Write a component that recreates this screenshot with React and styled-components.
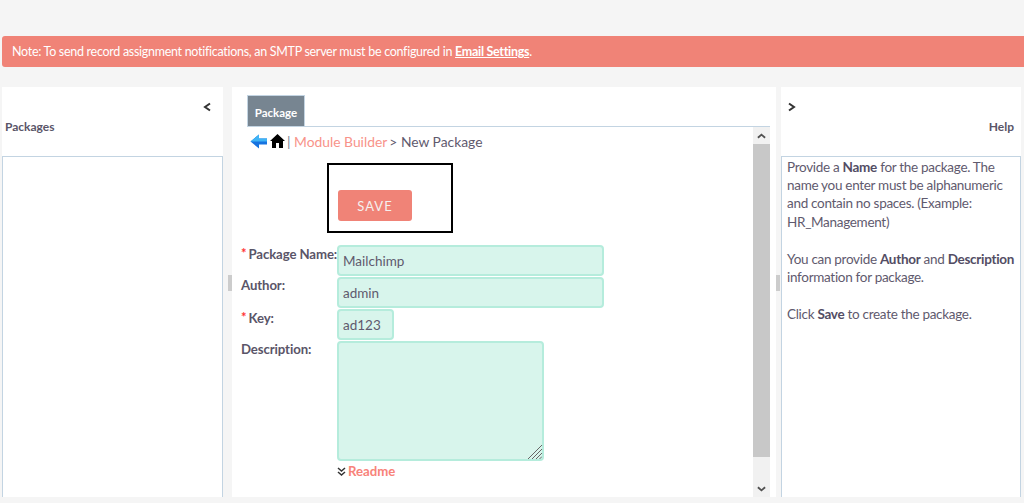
import React from "react";
import styled, { createGlobalStyle } from "styled-components";

const Global = createGlobalStyle`
  html, body { margin: 0; padding: 0; background: #f5f5f5; height: 503px; overflow: hidden; }
  * { box-sizing: border-box; }
  body { font-family: Lato, "Open Sans", sans-serif; color: #534d64; font-size: 13px; }
`;
const Page = styled.div`
  height: 503px;
  padding: 36px 0 6px 2px;
  display: flex;
  flex-direction: column;
  gap: 20px;
`;
const Alert = styled.div`
  height: 31px;
  background: #f08377;
  border-radius: 3px 0 0 3px;
  color: #fff;
  font-size: 12.5px;
  line-height: 31px;
  padding-left: 10px;
  letter-spacing: -0.29px;
  a { color: #fff; font-weight: 700; text-decoration: underline; }
`;
const Columns = styled.div`
  height: 410px;
  display: flex;
`;
const SidePanel = styled.section`
  width: ${p => p.$w}px;
  background: #fff;
  display: flex;
  flex-direction: column;
`;
const SideHead = styled.div`
  height: 69px;
  padding: 15px ${p => p.$right}px 0 ${p => p.$left}px;
  display: flex;
  flex-direction: column;
  align-items: ${p => p.$align};
`;
const Collapse = styled.svg`
  width: 8px;
  height: 10px;
  margin-bottom: 7px;
  align-self: ${p => p.$self};
  flex: none;
`;
const SideTitle = styled.div`
  font-size: 12px;
  font-weight: 700;
  line-height: 16px;
  color: #5a5568;
`;
const TreeBox = styled.div`
  flex: 1;
  border: 1px solid #c3d4e2;
  border-bottom: 0;
  padding: 0.5px 5px 0;
  font-size: 13.5px;
  letter-spacing: -0.3px;
  line-height: 18.4px;
  color: #5f5a6e;
  p { margin: 0 0 18.4px; }
  b { font-weight: 700; color: #534d64; }
`;
const Splitter = styled.div`
  width: ${p => p.$w}px;
  display: flex;
  align-items: center;
  padding-left: ${p => p.$pl}px;
  &::before {
    content: "";
    display: block;
    width: 4px;
    height: 16px;
    margin-top: -19px;
    background: #ccc;
  }
`;
const CenterPanel = styled.section`
  width: 544px;
  background: #fff;
  padding: 8px 6px 0 15px;
  display: flex;
  flex-direction: column;
`;
const Tab = styled.div`
  width: 58px;
  height: 31px;
  flex: none;
  background: #778591;
  border: 1px solid #c3d4e2;
  border-bottom: 0;
  color: #fff;
  font-size: 11.5px;
  font-weight: 700;
  line-height: 34px;
  text-align: center;
`;
const TabBody = styled.div`
  flex: 1;
  min-height: 0;
  border-top: 1px solid #c3d4e2;
  display: flex;
`;
const Form = styled.div`
  flex: 1;
  padding-top: 5px;
`;
const Crumb = styled.div`
  height: 18px;
  display: flex;
  align-items: center;
  padding-left: 3px;
  font-size: 13.85px;
  white-space: nowrap;
  color: #5f5a6e;
  a { color: #f8938a; margin-right: 2px; }
  i { font-style: normal; color: #778591; margin-left: 2px; }
`;
const BackIcon = styled.svg`
  width: 17px;
  height: 15px;
  flex: none;
`;
const HomeIcon = styled.svg`
  width: 15px;
  height: 14px;
  flex: none;
  margin-left: 3px;
`;
const SaveFrame = styled.div`
  width: 126px;
  height: 70px;
  margin: 13px 0 12px 80px;
  border: 2px solid #000;
  padding: 25px 0 0 9px;
`;
const SaveButton = styled.button`
  display: block;
  width: 74px;
  height: 31px;
  padding: 0;
  border: 0;
  border-radius: 3px;
  background: #f08377;
  color: #f5f0ee;
  font-family: inherit;
  font-size: 13px;
  letter-spacing: 1px;
`;
const Row = styled.div`
  display: flex;
  margin-bottom: 1px;
  margin-left: -6px;
`;
const Label = styled.label`
  width: 96px;
  flex: none;
  margin-top: -1px;
  font-size: 13.2px;
  font-weight: 700;
  line-height: 18px;
  white-space: nowrap;
  letter-spacing: -0.1px;
  color: #5a5568;
  span { color: #f33; font-size: 13px; margin-right: 2px; vertical-align: 1px; }
`;
const Field = styled.input`
  width: ${p => p.$w}px;
  height: 31px;
  border: 2px solid #b5ecdc;
  border-radius: 4px;
  background: #d8f5ec;
  color: #5f5a6e;
  font-family: inherit;
  font-size: 13.5px;
  padding: 1px 4px 0;
  outline: 0;
`;
const AreaWrap = styled.div`
  position: relative;
  width: 207px;
  height: 120px;
`;
const Area = styled.textarea`
  display: block;
  width: 100%;
  height: 100%;
  border: 2px solid #b5ecdc;
  border-radius: 4px;
  background: #d8f5ec;
  outline: 0;
  margin: 0;
  resize: none;
`;
const Grip = styled.svg`
  position: absolute;
  right: 2px;
  bottom: 2px;
  width: 14px;
  height: 14px;
`;
const Readme = styled.div`
  margin: 1px 0 0 90px;
  display: flex;
  align-items: center;
  gap: 2px;
  font-size: 13.2px;
  font-weight: 700;
  line-height: 18px;
  color: #f8837a;
  svg { width: 9px; height: 9px; flex: none; }
`;
const Scrollbar = styled.div`
  width: 17px;
  flex: none;
  background: #f1f1f1;
  display: flex;
  flex-direction: column;
  align-items: center;
`;
const ScrollArrow = styled.div`
  height: 17px;
  flex: none;
  width: 100%;
  display: flex;
  align-items: center;
  justify-content: center;
  svg { width: 9px; height: 6px; }
`;
const Thumb = styled.div`
  width: 100%;
  height: 313px;
  flex: none;
  background: #c8c8c8;
`;
const ScrollGap = styled.div`
  flex: 1;
`;

const Chev = ({ d }) => (
  <svg viewBox="0 0 10 6"><path d={d} fill="none" stroke="#505050" strokeWidth="2" /></svg>
);

export default function App() {
  return (
    <Page>
      <Global />
      <Alert>
        Note: To send record assignment notifications, an SMTP server must be configured in <a>Email Settings</a>.
      </Alert>
      <Columns>
        <SidePanel $w={221}>
          <SideHead $left={3} $right={12} $align="flex-start">
            <Collapse viewBox="0 0 8 10" $self="flex-end"><path d="M7 1.5 2 5l5 3.5" fill="none" stroke="#333" strokeWidth="2" /></Collapse>
            <SideTitle>Packages</SideTitle>
          </SideHead>
          <TreeBox />
        </SidePanel>
        <Splitter $w={9} $pl={5} />
        <CenterPanel>
          <Tab>Package</Tab>
          <TabBody>
            <Form>
              <Crumb>
                <BackIcon viewBox="0 0 17 15">
                  <path d="M9 .5.5 7.5 9 14.500V10.500H17V4.500H9z" fill="#1673e0" />
                  <path d="M9 .5.5 7.500H17V4.500H9z" fill="#3fb4f5" />
                </BackIcon>
                <HomeIcon viewBox="0 0 15 14">
                  <path d="M7.500 0 15 7h-2v7H9V9H6v5H2V7H0z" fill="#000" />
                </HomeIcon>
                <i>|</i><a>&nbsp;Module Builder</a>&gt;&nbsp;New Package
              </Crumb>
              <SaveFrame><SaveButton>SAVE</SaveButton></SaveFrame>
              <Row>
                <Label><span>*</span>Package Name:</Label>
                <Field $w={267} readOnly value="Mailchimp" />
              </Row>
              <Row>
                <Label>Author:</Label>
                <Field $w={267} readOnly value="admin" />
              </Row>
              <Row>
                <Label><span>*</span>Key:</Label>
                <Field $w={57} readOnly value="ad123" />
              </Row>
              <Row>
                <Label>Description:</Label>
                <AreaWrap>
                  <Area readOnly />
                  <Grip viewBox="0 0 14 14">
                    <path d="M0 14 14 0M4 14 14 4M8 14l6-6M11.500 14l2.500-2.500" stroke="#666" strokeWidth="1" fill="none" />
                  </Grip>
                </AreaWrap>
              </Row>
              <Readme>
                <svg viewBox="0 0 9 9"><path d="M1 1l3.500 3L8 1M1 5l3.500 3L8 5" fill="none" stroke="#333" strokeWidth="1.500" /></svg>
                Readme
              </Readme>
            </Form>
            <Scrollbar>
              <ScrollArrow><Chev d="M1 5 5 1.500 9 5" /></ScrollArrow>
              <Thumb />
              <ScrollGap />
              <ScrollArrow><Chev d="M1 1 5 4.500 9 1" /></ScrollArrow>
            </Scrollbar>
          </TabBody>
        </CenterPanel>
        <Splitter $w={5} $pl={0} />
        <SidePanel $w={240}>
          <SideHead $left={7} $right={7} $align="flex-end">
            <Collapse viewBox="0 0 8 10" $self="flex-start"><path d="M1 1.500 6 5 1 8.500" fill="none" stroke="#333" strokeWidth="2" /></Collapse>
            <SideTitle>Help</SideTitle>
          </SideHead>
          <TreeBox>
            <p>Provide a <b>Name</b> for the package. The name you enter must be alphanumeric and contain no spaces. (Example: HR_Management)</p>
            <p>You can provide <b>Author</b> and <b>Description</b> information for package.</p>
            <p>Click <b>Save</b> to create the package.</p>
          </TreeBox>
        </SidePanel>
      </Columns>
    </Page>
  );
}
